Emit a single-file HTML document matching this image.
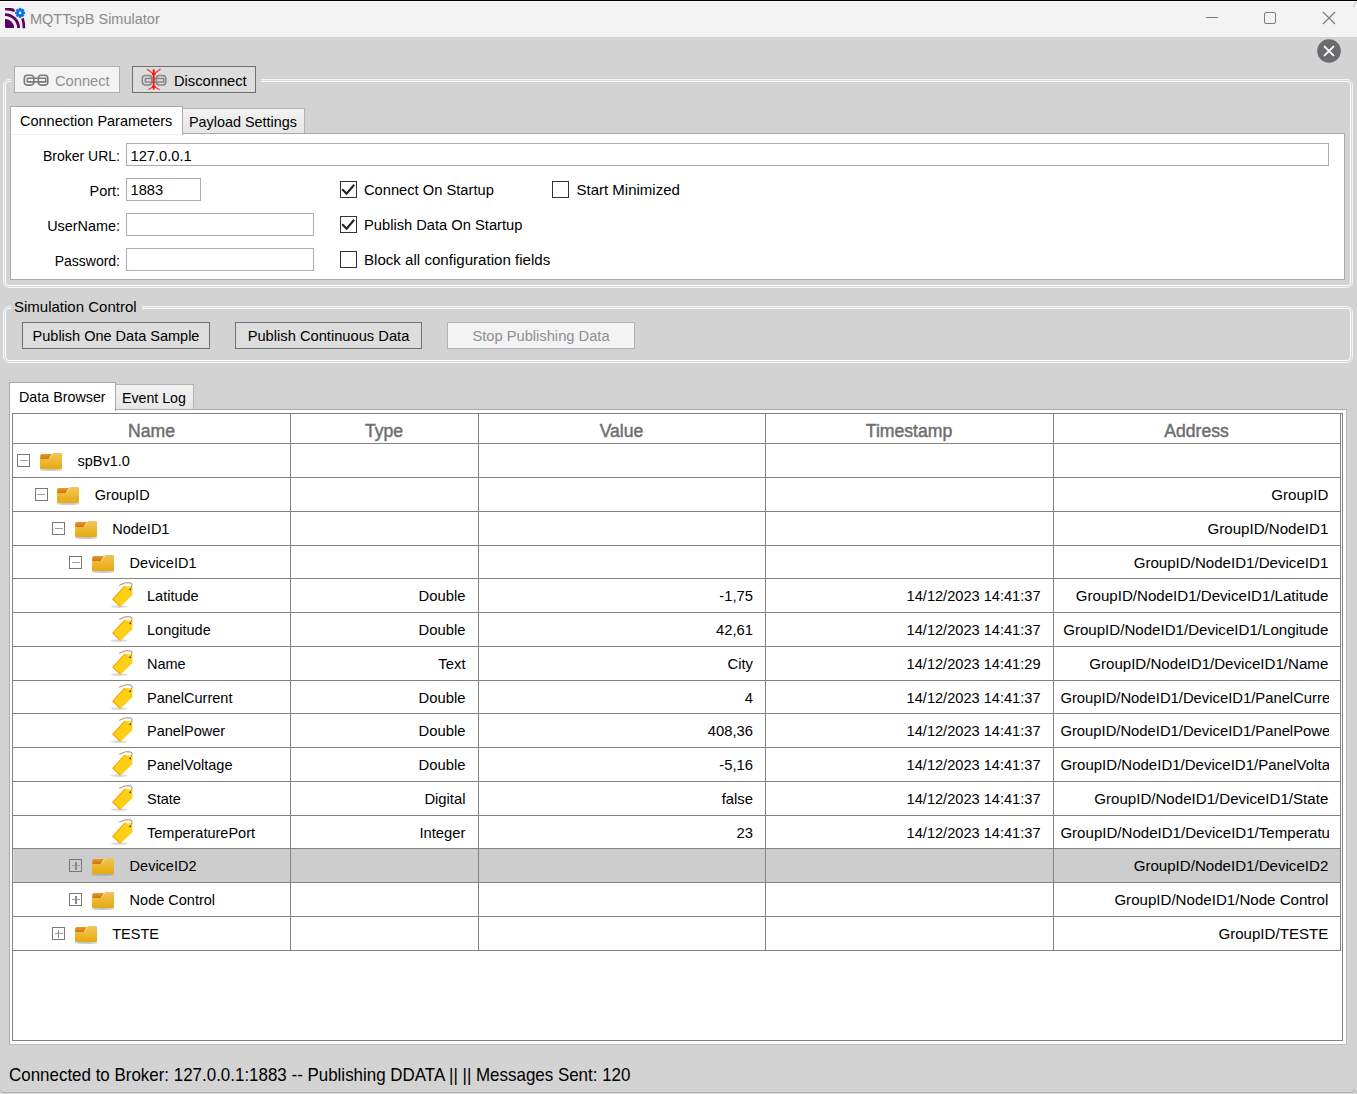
<!DOCTYPE html><html><head><meta charset="utf-8"><style>
html,body{margin:0;padding:0;}
body{width:1357px;height:1094px;overflow:hidden;position:relative;background:#d3d3d3;font-family:"Liberation Sans",sans-serif;}
.t{position:absolute;white-space:nowrap;line-height:20px;}
.b{position:absolute;box-sizing:border-box;}
svg{position:absolute;overflow:visible;}
</style></head><body>
<div class="b" style="left:0px;top:0px;width:1357px;height:37px;background:#f3f3f3;"></div>
<div class="b" style="left:0px;top:0px;width:1357px;height:1px;background:#000;"></div>
<div class="b" style="left:0px;top:1px;width:1357px;height:1px;background:#fbfbfb;"></div>
<svg style="left:5px;top:8px" width="21" height="21" viewBox="0 0 21 21">
<path d="M0 0.1 L6.3 0.1 Q9.2 0.4 9.8 2.3 L9.8 3.8 L7.6 3.8 Q5.5 2.3 0 2.3 Z" fill="#5d0066"/>
<path d="M0 5.2 A15 14.8 0 0 1 15 20 L12.1 20 A12.1 12 0 0 0 0 8 Z" fill="#5d0066"/>
<path d="M0 11 Q0 10.9 0.6 10.9 A9.2 9.1 0 0 1 9.1 20 L1.2 20 Q0 20 0 18.8 Z" fill="#5d0066"/>
<path d="M16.2 10.8 L18.9 10.1 Q20.4 15 20.2 20.2 L17.6 20.2 Q17.8 14.5 16.2 10.8 Z" fill="#5d0066"/>
<g transform="translate(15.1,4.9)"><circle r="3.7" fill="#0a72e6"/>
<g fill="#0a72e6"><rect x="-1.2" y="-5" width="2.4" height="10"/><rect x="-5" y="-1.2" width="10" height="2.4"/>
<rect x="-1.2" y="-5" width="2.4" height="10" transform="rotate(45)"/><rect x="-1.2" y="-5" width="2.4" height="10" transform="rotate(-45)"/></g>
<circle r="1.3" fill="#f3f3f3"/></g>
</svg>
<div class="t" style="left:30.00px;top:8.78px;font-size:14.5px;color:#8a8a8a;font-weight:normal;">MQTTspB Simulator</div>
<div class="b" style="left:1206px;top:17px;width:12px;height:1px;background:#7a7a7a;"></div>
<div class="b" style="left:1264px;top:12px;width:12px;height:12px;border:1px solid #7a7a7a;border-radius:2px;"></div>
<svg style="left:1322px;top:11px" width="14" height="14" viewBox="0 0 14 14"><path d="M1 1 L13 13 M13 1 L1 13" stroke="#7a7a7a" stroke-width="1.1"/></svg>
<svg style="left:1317px;top:39px" width="24" height="24" viewBox="0 0 24 24"><circle cx="12" cy="12" r="11.8" fill="#6b6a6e"/>
<path d="M7.6 7.6 L16.4 16.4 M16.4 7.6 L7.6 16.4" stroke="#fff" stroke-width="1.9" stroke-linecap="round"/></svg>
<div class="b" style="left:3px;top:79px;width:1350px;height:209px;border:1px solid rgba(255,255,255,0.75);border-radius:6px;"></div>
<div class="b" style="left:4px;top:80px;width:1348px;height:207px;border:1px solid #d3dde4;border-radius:5px;"></div>
<div class="b" style="left:5px;top:81px;width:1346px;height:205px;border:1px solid #ffffff;border-radius:4px;"></div>
<div class="b" style="left:11px;top:78px;width:250px;height:5px;background:#d3d3d3;"></div>
<div class="b" style="left:3px;top:306px;width:1350px;height:57px;border:1px solid rgba(255,255,255,0.75);border-radius:6px;"></div>
<div class="b" style="left:4px;top:307px;width:1348px;height:55px;border:1px solid #d3dde4;border-radius:5px;"></div>
<div class="b" style="left:5px;top:308px;width:1346px;height:53px;border:1px solid #ffffff;border-radius:4px;"></div>
<div class="b" style="left:11px;top:305px;width:131px;height:5px;background:#d3d3d3;"></div>
<div class="b" style="left:14px;top:66px;width:106px;height:27px;background:#f3f3f3;border:1px solid #adb1b5;"></div>
<svg style="left:23px;top:74px" width="27" height="13" viewBox="0 0 27 13">
<g fill="none" stroke="#7b7b7b" stroke-width="1.6">
<rect x="1.3" y="1.3" width="9.5" height="9.8" rx="3"/><rect x="15.3" y="1.3" width="9.5" height="9.8" rx="3"/>
<rect x="4.3" y="4.3" width="18.5" height="3.6" rx="0.5"/>
</g></svg>
<div class="t" style="left:55.00px;top:70.71px;font-size:14.7px;color:#8f8f8f;font-weight:normal;">Connect</div>
<div class="b" style="left:132px;top:66px;width:124px;height:27px;background:#dddddd;border:1px solid #6f6f6f;"></div>
<svg style="left:141px;top:67px" width="27" height="24" viewBox="0 0 27 24">
<g fill="none" stroke="#858585" stroke-width="1.5">
<rect x="1.3" y="8.5" width="9.5" height="9.5" rx="3.2"/><rect x="15.3" y="8.5" width="9.5" height="9.5" rx="3.2"/>
<rect x="4.3" y="11.5" width="18.5" height="3.4" rx="0.5"/></g>
<g stroke="#ff1414" fill="none"><path d="M12.7 2.3 L12.7 22.5" stroke-width="1.9"/><path d="M6 2 L12.7 7.3 L19.5 2" stroke-width="1.2" opacity="0.85"/><path d="M7.5 22.5 L12.7 19.5 L18.5 22.5" stroke-width="1.2" opacity="0.85"/></g>
<ellipse cx="12.7" cy="7.2" rx="2" ry="1.1" fill="#ff1010"/><ellipse cx="12.7" cy="19.6" rx="2" ry="1.1" fill="#ff1010"/>
</svg>
<div class="t" style="left:174.00px;top:70.91px;font-size:14.7px;color:#000;font-weight:normal;">Disconnect</div>
<div class="b" style="left:10px;top:133px;width:1335px;height:147px;background:#fff;border:1px solid #a9a9a9;"></div>
<div class="b" style="left:182px;top:108px;width:123px;height:25px;background:linear-gradient(#f2f2f2,#e6e6e6);border:1px solid #b3b3b3;border-bottom:none;"></div>
<div class="b" style="left:10px;top:106px;width:173px;height:29px;background:#fff;border:1px solid #a9a9a9;border-bottom:none;"></div>
<div class="b" style="left:11px;top:134px;width:171px;height:1px;background:#f0f0f0;"></div>
<div class="t" style="left:20.00px;top:110.98px;font-size:14.5px;color:#000;font-weight:normal;">Connection Parameters</div>
<div class="t" style="left:189.00px;top:111.81px;font-size:14.4px;color:#000;font-weight:normal;">Payload Settings</div>
<div class="t" style="right:1237.00px;top:146.15px;font-size:14.0px;color:#000;font-weight:normal;text-align:right;">Broker URL:</div>
<div class="b" style="left:126px;top:143px;width:1203px;height:23px;background:#fff;border:1px solid #a9adb3;"></div>
<div class="t" style="left:130.50px;top:145.91px;font-size:14.7px;color:#000;font-weight:normal;">127.0.0.1</div>
<div class="t" style="right:1237.00px;top:180.51px;font-size:14.4px;color:#000;font-weight:normal;text-align:right;">Port:</div>
<div class="b" style="left:126px;top:178px;width:75px;height:23px;background:#fff;border:1px solid #a9adb3;"></div>
<div class="t" style="left:130.50px;top:180.41px;font-size:14.7px;color:#000;font-weight:normal;">1883</div>
<div class="t" style="right:1237.00px;top:215.61px;font-size:14.4px;color:#000;font-weight:normal;text-align:right;">UserName:</div>
<div class="b" style="left:126px;top:213px;width:188px;height:23px;background:#fff;border:1px solid #a9adb3;"></div>
<div class="t" style="right:1237.00px;top:250.75px;font-size:14.0px;color:#000;font-weight:normal;text-align:right;">Password:</div>
<div class="b" style="left:126px;top:248px;width:188px;height:23px;background:#fff;border:1px solid #a9adb3;"></div>
<div class="b" style="left:340px;top:181px;width:17px;height:17px;background:#fff;border:1px solid #333;"></div>
<svg style="left:340px;top:181px" width="17" height="17" viewBox="0 0 17 17"><path d="M2.2 8.2 L6.6 12.6 L14.2 3.8" fill="none" stroke="#222" stroke-width="2.1"/></svg>
<div class="t" style="left:364.00px;top:179.91px;font-size:14.7px;color:#000;font-weight:normal;">Connect On Startup</div>
<div class="b" style="left:340px;top:216px;width:17px;height:17px;background:#fff;border:1px solid #333;"></div>
<svg style="left:340px;top:216px" width="17" height="17" viewBox="0 0 17 17"><path d="M2.2 8.2 L6.6 12.6 L14.2 3.8" fill="none" stroke="#222" stroke-width="2.1"/></svg>
<div class="t" style="left:364.00px;top:214.91px;font-size:14.7px;color:#000;font-weight:normal;">Publish Data On Startup</div>
<div class="b" style="left:340px;top:251px;width:17px;height:17px;background:#fff;border:1px solid #333;"></div>
<div class="t" style="left:364.00px;top:249.77px;font-size:15.1px;color:#000;font-weight:normal;">Block all configuration fields</div>
<div class="b" style="left:552px;top:181px;width:17px;height:17px;background:#fff;border:1px solid #333;"></div>
<div class="t" style="left:576.50px;top:179.80px;font-size:15px;color:#000;font-weight:normal;">Start Minimized</div>
<div class="t" style="left:14.00px;top:296.80px;font-size:15px;color:#000;font-weight:normal;">Simulation Control</div>
<div class="b" style="left:22px;top:322px;width:188px;height:27px;background:#dddddd;border:1px solid #707070;"></div>
<div class="t" style="left:-84.00px;width:400px;top:326.28px;font-size:14.5px;color:#000;font-weight:normal;text-align:center;">Publish One Data Sample</div>
<div class="b" style="left:235px;top:322px;width:187px;height:27px;background:#dddddd;border:1px solid #707070;"></div>
<div class="t" style="left:128.50px;width:400px;top:326.21px;font-size:14.7px;color:#000;font-weight:normal;text-align:center;">Publish Continuous Data</div>
<div class="b" style="left:447px;top:322px;width:188px;height:27px;background:#f3f3f3;border:1px solid #b0b4b8;"></div>
<div class="t" style="left:341.00px;width:400px;top:326.21px;font-size:14.7px;color:#8f8f8f;font-weight:normal;text-align:center;">Stop Publishing Data</div>
<div class="b" style="left:9px;top:409px;width:1338px;height:636px;background:#fff;border:1px solid #bcbcbc;border-left-color:#a9a9a9;border-top-color:#a9a9a9;"></div>
<div class="b" style="left:115px;top:384px;width:79px;height:25px;background:linear-gradient(#f2f2f2,#e6e6e6);border:1px solid #b3b3b3;border-bottom:none;"></div>
<div class="b" style="left:9px;top:382px;width:107px;height:29px;background:#fff;border:1px solid #a9a9a9;border-bottom:none;"></div>
<div class="t" style="left:19.00px;top:387.05px;font-size:14.3px;color:#000;font-weight:normal;">Data Browser</div>
<div class="t" style="left:122.00px;top:387.58px;font-size:14.2px;color:#000;font-weight:normal;">Event Log</div>
<div class="b" style="left:12px;top:413px;width:1331px;height:628px;background:#fff;border:1px solid #828282;"></div>
<div class="b" style="left:13px;top:443px;width:1327px;height:1px;background:#828282;"></div>
<div class="b" style="left:13px;top:477px;width:1327px;height:1px;background:#828282;"></div>
<div class="b" style="left:13px;top:511px;width:1327px;height:1px;background:#828282;"></div>
<div class="b" style="left:13px;top:545px;width:1327px;height:1px;background:#828282;"></div>
<div class="b" style="left:13px;top:578px;width:1327px;height:1px;background:#828282;"></div>
<div class="b" style="left:13px;top:612px;width:1327px;height:1px;background:#828282;"></div>
<div class="b" style="left:13px;top:646px;width:1327px;height:1px;background:#828282;"></div>
<div class="b" style="left:13px;top:680px;width:1327px;height:1px;background:#828282;"></div>
<div class="b" style="left:13px;top:713px;width:1327px;height:1px;background:#828282;"></div>
<div class="b" style="left:13px;top:747px;width:1327px;height:1px;background:#828282;"></div>
<div class="b" style="left:13px;top:781px;width:1327px;height:1px;background:#828282;"></div>
<div class="b" style="left:13px;top:815px;width:1327px;height:1px;background:#828282;"></div>
<div class="b" style="left:13px;top:848px;width:1327px;height:1px;background:#828282;"></div>
<div class="b" style="left:13px;top:882px;width:1327px;height:1px;background:#828282;"></div>
<div class="b" style="left:13px;top:916px;width:1327px;height:1px;background:#828282;"></div>
<div class="b" style="left:13px;top:950px;width:1327px;height:1px;background:#828282;"></div>
<div class="b" style="left:13px;top:849px;width:1327px;height:33px;background:#cdcdcd;"></div>
<div class="b" style="left:13px;top:849px;width:1px;height:33px;background:#e0e0e0;"></div>
<div class="b" style="left:290px;top:414px;width:1px;height:537px;background:#828282;"></div>
<div class="b" style="left:478px;top:414px;width:1px;height:537px;background:#828282;"></div>
<div class="b" style="left:765px;top:414px;width:1px;height:537px;background:#828282;"></div>
<div class="b" style="left:1053px;top:414px;width:1px;height:537px;background:#828282;"></div>
<div class="b" style="left:1340px;top:414px;width:1px;height:537px;background:#828282;"></div>
<div class="t" style="left:-48.50px;width:400px;top:420.80px;font-size:17.6px;color:#6e6e6e;font-weight:normal;text-align:center;-webkit-text-stroke:0.45px #6e6e6e;">Name</div>
<div class="t" style="left:184.00px;width:400px;top:420.80px;font-size:17.6px;color:#6e6e6e;font-weight:normal;text-align:center;-webkit-text-stroke:0.45px #6e6e6e;">Type</div>
<div class="t" style="left:421.50px;width:400px;top:420.80px;font-size:17.6px;color:#6e6e6e;font-weight:normal;text-align:center;-webkit-text-stroke:0.45px #6e6e6e;">Value</div>
<div class="t" style="left:709.00px;width:400px;top:420.80px;font-size:17.6px;color:#6e6e6e;font-weight:normal;text-align:center;-webkit-text-stroke:0.45px #6e6e6e;">Timestamp</div>
<div class="t" style="left:996.50px;width:400px;top:420.80px;font-size:17.6px;color:#6e6e6e;font-weight:normal;text-align:center;-webkit-text-stroke:0.45px #6e6e6e;">Address</div>
<div class="b" style="left:17.2px;top:454.2px;width:13px;height:13px;border:1px solid #787878;background:#fff;"></div>
<div class="b" style="left:19.8px;top:460.2px;width:8px;height:1px;background:#a0a0a0;"></div>
<svg style="left:40.0px;top:452.8px" width="24" height="19" viewBox="0 0 24 19">
<defs><linearGradient id="fg0" x1="0" y1="0" x2="0" y2="1"><stop offset="0" stop-color="#f3c55a"/><stop offset="1" stop-color="#e5aa0d"/></linearGradient>
<linearGradient id="ft0" x1="0" y1="0" x2="0" y2="1"><stop offset="0" stop-color="#e89a30"/><stop offset="1" stop-color="#cf7408"/></linearGradient></defs>
<ellipse cx="11" cy="16.9" rx="11.8" ry="0.8" fill="#8e96a6" opacity="0.6"/>
<path d="M0.2 6 L0.2 2.6 Q0.4 1.2 1.6 1.1 L12.5 1.1 L12.5 6 Z" fill="url(#ft0)"/>
<path d="M0 5.9 L9 5.9 L12.6 0.8 Q13 0.1 14 0.1 L21 0.1 Q22 0.1 22 1.2 L22 15 Q22 16.1 20.8 16.1 L1.2 16.1 Q0 16.1 0 15 Z" fill="url(#fg0)"/>
<path d="M9.2 5.8 L12.8 0.6" stroke="#fbe7a0" stroke-width="0.9"/>
</svg>
<div class="t" style="left:77.40px;top:451.38px;font-size:14.5px;color:#000;font-weight:normal;">spBv1.0</div>
<div class="b" style="left:34.6px;top:488.2px;width:13px;height:13px;border:1px solid #787878;background:#fff;"></div>
<div class="b" style="left:37.2px;top:494.2px;width:8px;height:1px;background:#a0a0a0;"></div>
<svg style="left:57.4px;top:486.8px" width="24" height="19" viewBox="0 0 24 19">
<defs><linearGradient id="fg1" x1="0" y1="0" x2="0" y2="1"><stop offset="0" stop-color="#f3c55a"/><stop offset="1" stop-color="#e5aa0d"/></linearGradient>
<linearGradient id="ft1" x1="0" y1="0" x2="0" y2="1"><stop offset="0" stop-color="#e89a30"/><stop offset="1" stop-color="#cf7408"/></linearGradient></defs>
<ellipse cx="11" cy="16.9" rx="11.8" ry="0.8" fill="#8e96a6" opacity="0.6"/>
<path d="M0.2 6 L0.2 2.6 Q0.4 1.2 1.6 1.1 L12.5 1.1 L12.5 6 Z" fill="url(#ft1)"/>
<path d="M0 5.9 L9 5.9 L12.6 0.8 Q13 0.1 14 0.1 L21 0.1 Q22 0.1 22 1.2 L22 15 Q22 16.1 20.8 16.1 L1.2 16.1 Q0 16.1 0 15 Z" fill="url(#fg1)"/>
<path d="M9.2 5.8 L12.8 0.6" stroke="#fbe7a0" stroke-width="0.9"/>
</svg>
<div class="t" style="left:94.80px;top:485.38px;font-size:14.5px;color:#000;font-weight:normal;">GroupID</div>
<div class="t" style="right:28.70px;top:485.17px;font-size:15.1px;color:#000;font-weight:normal;text-align:right;">GroupID</div>
<div class="b" style="left:52.0px;top:522.2px;width:13px;height:13px;border:1px solid #787878;background:#fff;"></div>
<div class="b" style="left:54.6px;top:528.2px;width:8px;height:1px;background:#a0a0a0;"></div>
<svg style="left:74.8px;top:520.8px" width="24" height="19" viewBox="0 0 24 19">
<defs><linearGradient id="fg2" x1="0" y1="0" x2="0" y2="1"><stop offset="0" stop-color="#f3c55a"/><stop offset="1" stop-color="#e5aa0d"/></linearGradient>
<linearGradient id="ft2" x1="0" y1="0" x2="0" y2="1"><stop offset="0" stop-color="#e89a30"/><stop offset="1" stop-color="#cf7408"/></linearGradient></defs>
<ellipse cx="11" cy="16.9" rx="11.8" ry="0.8" fill="#8e96a6" opacity="0.6"/>
<path d="M0.2 6 L0.2 2.6 Q0.4 1.2 1.6 1.1 L12.5 1.1 L12.5 6 Z" fill="url(#ft2)"/>
<path d="M0 5.9 L9 5.9 L12.6 0.8 Q13 0.1 14 0.1 L21 0.1 Q22 0.1 22 1.2 L22 15 Q22 16.1 20.8 16.1 L1.2 16.1 Q0 16.1 0 15 Z" fill="url(#fg2)"/>
<path d="M9.2 5.8 L12.8 0.6" stroke="#fbe7a0" stroke-width="0.9"/>
</svg>
<div class="t" style="left:112.20px;top:519.38px;font-size:14.5px;color:#000;font-weight:normal;">NodeID1</div>
<div class="t" style="right:28.70px;top:519.17px;font-size:15.1px;color:#000;font-weight:normal;text-align:right;">GroupID/NodeID1</div>
<div class="b" style="left:69.4px;top:556.2px;width:13px;height:13px;border:1px solid #787878;background:#fff;"></div>
<div class="b" style="left:72.0px;top:562.2px;width:8px;height:1px;background:#a0a0a0;"></div>
<svg style="left:92.2px;top:554.8px" width="24" height="19" viewBox="0 0 24 19">
<defs><linearGradient id="fg3" x1="0" y1="0" x2="0" y2="1"><stop offset="0" stop-color="#f3c55a"/><stop offset="1" stop-color="#e5aa0d"/></linearGradient>
<linearGradient id="ft3" x1="0" y1="0" x2="0" y2="1"><stop offset="0" stop-color="#e89a30"/><stop offset="1" stop-color="#cf7408"/></linearGradient></defs>
<ellipse cx="11" cy="16.9" rx="11.8" ry="0.8" fill="#8e96a6" opacity="0.6"/>
<path d="M0.2 6 L0.2 2.6 Q0.4 1.2 1.6 1.1 L12.5 1.1 L12.5 6 Z" fill="url(#ft3)"/>
<path d="M0 5.9 L9 5.9 L12.6 0.8 Q13 0.1 14 0.1 L21 0.1 Q22 0.1 22 1.2 L22 15 Q22 16.1 20.8 16.1 L1.2 16.1 Q0 16.1 0 15 Z" fill="url(#fg3)"/>
<path d="M9.2 5.8 L12.8 0.6" stroke="#fbe7a0" stroke-width="0.9"/>
</svg>
<div class="t" style="left:129.60px;top:553.38px;font-size:14.5px;color:#000;font-weight:normal;">DeviceID1</div>
<div class="t" style="right:28.70px;top:553.17px;font-size:15.1px;color:#000;font-weight:normal;text-align:right;">GroupID/NodeID1/DeviceID1</div>
<svg style="left:106.8px;top:581.2px" width="28" height="28" viewBox="0 0 28 28">
<ellipse cx="12" cy="25.6" rx="8.5" ry="1.3" fill="#7d8594" opacity="0.3"/>
<path d="M17.5 4.7 L25.2 5.6 L25.5 13.9 L13.2 26 L5.2 18.3 Z" fill="#fdd017"/>
<path d="M17.5 4.7 L5.2 18.3 L13.2 26 L13.6 25 L6.5 18.3 L18 5.6 Z" fill="#f79800" opacity="0.9"/>
<path d="M18.5 5 L25.2 5.6 L25.4 10 Q22 6.5 18.5 5 Z" fill="#fff23a" opacity="0.8"/>
<circle cx="23.3" cy="8.2" r="1.05" fill="#6b3d0c"/>
<path d="M12.2 4.3 Q19 0.3 24 2 Q26.5 3.5 23.2 8.1" fill="none" stroke="#a47a4e" stroke-width="0.9"/>
</svg>
<div class="t" style="left:147.00px;top:586.38px;font-size:14.5px;color:#000;font-weight:normal;">Latitude</div>
<div class="t" style="right:891.50px;top:586.27px;font-size:14.8px;color:#000;font-weight:normal;text-align:right;">Double</div>
<div class="t" style="right:604.00px;top:586.27px;font-size:14.8px;color:#000;font-weight:normal;text-align:right;">-1,75</div>
<div class="t" style="right:316.50px;top:586.34px;font-size:14.6px;color:#000;font-weight:normal;text-align:right;">14/12/2023 14:41:37</div>
<div class="t" style="right:28.70px;top:586.17px;font-size:15.1px;color:#000;font-weight:normal;text-align:right;">GroupID/NodeID1/DeviceID1/Latitude</div>
<svg style="left:106.8px;top:615.2px" width="28" height="28" viewBox="0 0 28 28">
<ellipse cx="12" cy="25.6" rx="8.5" ry="1.3" fill="#7d8594" opacity="0.3"/>
<path d="M17.5 4.7 L25.2 5.6 L25.5 13.9 L13.2 26 L5.2 18.3 Z" fill="#fdd017"/>
<path d="M17.5 4.7 L5.2 18.3 L13.2 26 L13.6 25 L6.5 18.3 L18 5.6 Z" fill="#f79800" opacity="0.9"/>
<path d="M18.5 5 L25.2 5.6 L25.4 10 Q22 6.5 18.5 5 Z" fill="#fff23a" opacity="0.8"/>
<circle cx="23.3" cy="8.2" r="1.05" fill="#6b3d0c"/>
<path d="M12.2 4.3 Q19 0.3 24 2 Q26.5 3.5 23.2 8.1" fill="none" stroke="#a47a4e" stroke-width="0.9"/>
</svg>
<div class="t" style="left:147.00px;top:620.38px;font-size:14.5px;color:#000;font-weight:normal;">Longitude</div>
<div class="t" style="right:891.50px;top:620.27px;font-size:14.8px;color:#000;font-weight:normal;text-align:right;">Double</div>
<div class="t" style="right:604.00px;top:620.27px;font-size:14.8px;color:#000;font-weight:normal;text-align:right;">42,61</div>
<div class="t" style="right:316.50px;top:620.34px;font-size:14.6px;color:#000;font-weight:normal;text-align:right;">14/12/2023 14:41:37</div>
<div class="t" style="right:28.70px;top:620.17px;font-size:15.1px;color:#000;font-weight:normal;text-align:right;">GroupID/NodeID1/DeviceID1/Longitude</div>
<svg style="left:106.8px;top:649.2px" width="28" height="28" viewBox="0 0 28 28">
<ellipse cx="12" cy="25.6" rx="8.5" ry="1.3" fill="#7d8594" opacity="0.3"/>
<path d="M17.5 4.7 L25.2 5.6 L25.5 13.9 L13.2 26 L5.2 18.3 Z" fill="#fdd017"/>
<path d="M17.5 4.7 L5.2 18.3 L13.2 26 L13.6 25 L6.5 18.3 L18 5.6 Z" fill="#f79800" opacity="0.9"/>
<path d="M18.5 5 L25.2 5.6 L25.4 10 Q22 6.5 18.5 5 Z" fill="#fff23a" opacity="0.8"/>
<circle cx="23.3" cy="8.2" r="1.05" fill="#6b3d0c"/>
<path d="M12.2 4.3 Q19 0.3 24 2 Q26.5 3.5 23.2 8.1" fill="none" stroke="#a47a4e" stroke-width="0.9"/>
</svg>
<div class="t" style="left:147.00px;top:654.38px;font-size:14.5px;color:#000;font-weight:normal;">Name</div>
<div class="t" style="right:891.50px;top:654.27px;font-size:14.8px;color:#000;font-weight:normal;text-align:right;">Text</div>
<div class="t" style="right:604.00px;top:654.27px;font-size:14.8px;color:#000;font-weight:normal;text-align:right;">City</div>
<div class="t" style="right:316.50px;top:654.34px;font-size:14.6px;color:#000;font-weight:normal;text-align:right;">14/12/2023 14:41:29</div>
<div class="t" style="right:28.70px;top:654.17px;font-size:15.1px;color:#000;font-weight:normal;text-align:right;">GroupID/NodeID1/DeviceID1/Name</div>
<svg style="left:106.8px;top:683.2px" width="28" height="28" viewBox="0 0 28 28">
<ellipse cx="12" cy="25.6" rx="8.5" ry="1.3" fill="#7d8594" opacity="0.3"/>
<path d="M17.5 4.7 L25.2 5.6 L25.5 13.9 L13.2 26 L5.2 18.3 Z" fill="#fdd017"/>
<path d="M17.5 4.7 L5.2 18.3 L13.2 26 L13.6 25 L6.5 18.3 L18 5.6 Z" fill="#f79800" opacity="0.9"/>
<path d="M18.5 5 L25.2 5.6 L25.4 10 Q22 6.5 18.5 5 Z" fill="#fff23a" opacity="0.8"/>
<circle cx="23.3" cy="8.2" r="1.05" fill="#6b3d0c"/>
<path d="M12.2 4.3 Q19 0.3 24 2 Q26.5 3.5 23.2 8.1" fill="none" stroke="#a47a4e" stroke-width="0.9"/>
</svg>
<div class="t" style="left:147.00px;top:688.38px;font-size:14.5px;color:#000;font-weight:normal;">PanelCurrent</div>
<div class="t" style="right:891.50px;top:688.27px;font-size:14.8px;color:#000;font-weight:normal;text-align:right;">Double</div>
<div class="t" style="right:604.00px;top:688.27px;font-size:14.8px;color:#000;font-weight:normal;text-align:right;">4</div>
<div class="t" style="right:316.50px;top:688.34px;font-size:14.6px;color:#000;font-weight:normal;text-align:right;">14/12/2023 14:41:37</div>
<div style="position:absolute;left:1059px;top:680.2px;width:270px;height:33px;overflow:hidden;">
<div class="t" style="left:1.40px;top:8.07px;font-size:14.8px;color:#000;font-weight:normal;">GroupID/NodeID1/DeviceID1/PanelCurre</div>
</div>
<svg style="left:106.8px;top:716.2px" width="28" height="28" viewBox="0 0 28 28">
<ellipse cx="12" cy="25.6" rx="8.5" ry="1.3" fill="#7d8594" opacity="0.3"/>
<path d="M17.5 4.7 L25.2 5.6 L25.5 13.9 L13.2 26 L5.2 18.3 Z" fill="#fdd017"/>
<path d="M17.5 4.7 L5.2 18.3 L13.2 26 L13.6 25 L6.5 18.3 L18 5.6 Z" fill="#f79800" opacity="0.9"/>
<path d="M18.5 5 L25.2 5.6 L25.4 10 Q22 6.5 18.5 5 Z" fill="#fff23a" opacity="0.8"/>
<circle cx="23.3" cy="8.2" r="1.05" fill="#6b3d0c"/>
<path d="M12.2 4.3 Q19 0.3 24 2 Q26.5 3.5 23.2 8.1" fill="none" stroke="#a47a4e" stroke-width="0.9"/>
</svg>
<div class="t" style="left:147.00px;top:721.38px;font-size:14.5px;color:#000;font-weight:normal;">PanelPower</div>
<div class="t" style="right:891.50px;top:721.27px;font-size:14.8px;color:#000;font-weight:normal;text-align:right;">Double</div>
<div class="t" style="right:604.00px;top:721.27px;font-size:14.8px;color:#000;font-weight:normal;text-align:right;">408,36</div>
<div class="t" style="right:316.50px;top:721.34px;font-size:14.6px;color:#000;font-weight:normal;text-align:right;">14/12/2023 14:41:37</div>
<div style="position:absolute;left:1059px;top:713.2px;width:270px;height:33px;overflow:hidden;">
<div class="t" style="left:1.40px;top:8.07px;font-size:14.8px;color:#000;font-weight:normal;">GroupID/NodeID1/DeviceID1/PanelPowe</div>
</div>
<svg style="left:106.8px;top:750.2px" width="28" height="28" viewBox="0 0 28 28">
<ellipse cx="12" cy="25.6" rx="8.5" ry="1.3" fill="#7d8594" opacity="0.3"/>
<path d="M17.5 4.7 L25.2 5.6 L25.5 13.9 L13.2 26 L5.2 18.3 Z" fill="#fdd017"/>
<path d="M17.5 4.7 L5.2 18.3 L13.2 26 L13.6 25 L6.5 18.3 L18 5.6 Z" fill="#f79800" opacity="0.9"/>
<path d="M18.5 5 L25.2 5.6 L25.4 10 Q22 6.5 18.5 5 Z" fill="#fff23a" opacity="0.8"/>
<circle cx="23.3" cy="8.2" r="1.05" fill="#6b3d0c"/>
<path d="M12.2 4.3 Q19 0.3 24 2 Q26.5 3.5 23.2 8.1" fill="none" stroke="#a47a4e" stroke-width="0.9"/>
</svg>
<div class="t" style="left:147.00px;top:755.38px;font-size:14.5px;color:#000;font-weight:normal;">PanelVoltage</div>
<div class="t" style="right:891.50px;top:755.27px;font-size:14.8px;color:#000;font-weight:normal;text-align:right;">Double</div>
<div class="t" style="right:604.00px;top:755.27px;font-size:14.8px;color:#000;font-weight:normal;text-align:right;">-5,16</div>
<div class="t" style="right:316.50px;top:755.34px;font-size:14.6px;color:#000;font-weight:normal;text-align:right;">14/12/2023 14:41:37</div>
<div style="position:absolute;left:1059px;top:747.2px;width:270px;height:33px;overflow:hidden;">
<div class="t" style="left:1.40px;top:7.99px;font-size:15.03px;color:#000;font-weight:normal;">GroupID/NodeID1/DeviceID1/PanelVolta</div>
</div>
<svg style="left:106.8px;top:784.2px" width="28" height="28" viewBox="0 0 28 28">
<ellipse cx="12" cy="25.6" rx="8.5" ry="1.3" fill="#7d8594" opacity="0.3"/>
<path d="M17.5 4.7 L25.2 5.6 L25.5 13.9 L13.2 26 L5.2 18.3 Z" fill="#fdd017"/>
<path d="M17.5 4.7 L5.2 18.3 L13.2 26 L13.6 25 L6.5 18.3 L18 5.6 Z" fill="#f79800" opacity="0.9"/>
<path d="M18.5 5 L25.2 5.6 L25.4 10 Q22 6.5 18.5 5 Z" fill="#fff23a" opacity="0.8"/>
<circle cx="23.3" cy="8.2" r="1.05" fill="#6b3d0c"/>
<path d="M12.2 4.3 Q19 0.3 24 2 Q26.5 3.5 23.2 8.1" fill="none" stroke="#a47a4e" stroke-width="0.9"/>
</svg>
<div class="t" style="left:147.00px;top:789.38px;font-size:14.5px;color:#000;font-weight:normal;">State</div>
<div class="t" style="right:891.50px;top:789.27px;font-size:14.8px;color:#000;font-weight:normal;text-align:right;">Digital</div>
<div class="t" style="right:604.00px;top:789.27px;font-size:14.8px;color:#000;font-weight:normal;text-align:right;">false</div>
<div class="t" style="right:316.50px;top:789.34px;font-size:14.6px;color:#000;font-weight:normal;text-align:right;">14/12/2023 14:41:37</div>
<div class="t" style="right:28.70px;top:789.17px;font-size:15.1px;color:#000;font-weight:normal;text-align:right;">GroupID/NodeID1/DeviceID1/State</div>
<svg style="left:106.8px;top:818.2px" width="28" height="28" viewBox="0 0 28 28">
<ellipse cx="12" cy="25.6" rx="8.5" ry="1.3" fill="#7d8594" opacity="0.3"/>
<path d="M17.5 4.7 L25.2 5.6 L25.5 13.9 L13.2 26 L5.2 18.3 Z" fill="#fdd017"/>
<path d="M17.5 4.7 L5.2 18.3 L13.2 26 L13.6 25 L6.5 18.3 L18 5.6 Z" fill="#f79800" opacity="0.9"/>
<path d="M18.5 5 L25.2 5.6 L25.4 10 Q22 6.5 18.5 5 Z" fill="#fff23a" opacity="0.8"/>
<circle cx="23.3" cy="8.2" r="1.05" fill="#6b3d0c"/>
<path d="M12.2 4.3 Q19 0.3 24 2 Q26.5 3.5 23.2 8.1" fill="none" stroke="#a47a4e" stroke-width="0.9"/>
</svg>
<div class="t" style="left:147.00px;top:823.38px;font-size:14.5px;color:#000;font-weight:normal;">TemperaturePort</div>
<div class="t" style="right:891.50px;top:823.27px;font-size:14.8px;color:#000;font-weight:normal;text-align:right;">Integer</div>
<div class="t" style="right:604.00px;top:823.27px;font-size:14.8px;color:#000;font-weight:normal;text-align:right;">23</div>
<div class="t" style="right:316.50px;top:823.34px;font-size:14.6px;color:#000;font-weight:normal;text-align:right;">14/12/2023 14:41:37</div>
<div style="position:absolute;left:1059px;top:815.2px;width:270px;height:33px;overflow:hidden;">
<div class="t" style="left:1.40px;top:7.98px;font-size:15.07px;color:#000;font-weight:normal;">GroupID/NodeID1/DeviceID1/Temperatu</div>
</div>
<div class="b" style="left:69.4px;top:859.2px;width:13px;height:13px;border:1px solid #787878;background:#cdcdcd;"></div>
<div class="b" style="left:72.0px;top:865.2px;width:8px;height:1px;background:#a0a0a0;"></div>
<div class="b" style="left:75.4px;top:861.5px;width:1.4px;height:8.4px;background:#8a8a8a;"></div>
<svg style="left:92.2px;top:857.8px" width="24" height="19" viewBox="0 0 24 19">
<defs><linearGradient id="fg12" x1="0" y1="0" x2="0" y2="1"><stop offset="0" stop-color="#f3c55a"/><stop offset="1" stop-color="#e5aa0d"/></linearGradient>
<linearGradient id="ft12" x1="0" y1="0" x2="0" y2="1"><stop offset="0" stop-color="#e89a30"/><stop offset="1" stop-color="#cf7408"/></linearGradient></defs>
<ellipse cx="11" cy="16.9" rx="11.8" ry="0.8" fill="#8e96a6" opacity="0.6"/>
<path d="M0.2 6 L0.2 2.6 Q0.4 1.2 1.6 1.1 L12.5 1.1 L12.5 6 Z" fill="url(#ft12)"/>
<path d="M0 5.9 L9 5.9 L12.6 0.8 Q13 0.1 14 0.1 L21 0.1 Q22 0.1 22 1.2 L22 15 Q22 16.1 20.8 16.1 L1.2 16.1 Q0 16.1 0 15 Z" fill="url(#fg12)"/>
<path d="M9.2 5.8 L12.8 0.6" stroke="#fbe7a0" stroke-width="0.9"/>
</svg>
<div class="t" style="left:129.60px;top:856.38px;font-size:14.5px;color:#000;font-weight:normal;">DeviceID2</div>
<div class="t" style="right:28.70px;top:856.17px;font-size:15.1px;color:#000;font-weight:normal;text-align:right;">GroupID/NodeID1/DeviceID2</div>
<div class="b" style="left:69.4px;top:893.2px;width:13px;height:13px;border:1px solid #787878;background:#fff;"></div>
<div class="b" style="left:72.0px;top:899.2px;width:8px;height:1px;background:#a0a0a0;"></div>
<div class="b" style="left:75.4px;top:895.5px;width:1.4px;height:8.4px;background:#8a8a8a;"></div>
<svg style="left:92.2px;top:891.8px" width="24" height="19" viewBox="0 0 24 19">
<defs><linearGradient id="fg13" x1="0" y1="0" x2="0" y2="1"><stop offset="0" stop-color="#f3c55a"/><stop offset="1" stop-color="#e5aa0d"/></linearGradient>
<linearGradient id="ft13" x1="0" y1="0" x2="0" y2="1"><stop offset="0" stop-color="#e89a30"/><stop offset="1" stop-color="#cf7408"/></linearGradient></defs>
<ellipse cx="11" cy="16.9" rx="11.8" ry="0.8" fill="#8e96a6" opacity="0.6"/>
<path d="M0.2 6 L0.2 2.6 Q0.4 1.2 1.6 1.1 L12.5 1.1 L12.5 6 Z" fill="url(#ft13)"/>
<path d="M0 5.9 L9 5.9 L12.6 0.8 Q13 0.1 14 0.1 L21 0.1 Q22 0.1 22 1.2 L22 15 Q22 16.1 20.8 16.1 L1.2 16.1 Q0 16.1 0 15 Z" fill="url(#fg13)"/>
<path d="M9.2 5.8 L12.8 0.6" stroke="#fbe7a0" stroke-width="0.9"/>
</svg>
<div class="t" style="left:129.60px;top:890.38px;font-size:14.5px;color:#000;font-weight:normal;">Node Control</div>
<div class="t" style="right:28.70px;top:890.17px;font-size:15.1px;color:#000;font-weight:normal;text-align:right;">GroupID/NodeID1/Node Control</div>
<div class="b" style="left:52.0px;top:927.2px;width:13px;height:13px;border:1px solid #787878;background:#fff;"></div>
<div class="b" style="left:54.6px;top:933.2px;width:8px;height:1px;background:#a0a0a0;"></div>
<div class="b" style="left:58.0px;top:929.5px;width:1.4px;height:8.4px;background:#8a8a8a;"></div>
<svg style="left:74.8px;top:925.8px" width="24" height="19" viewBox="0 0 24 19">
<defs><linearGradient id="fg14" x1="0" y1="0" x2="0" y2="1"><stop offset="0" stop-color="#f3c55a"/><stop offset="1" stop-color="#e5aa0d"/></linearGradient>
<linearGradient id="ft14" x1="0" y1="0" x2="0" y2="1"><stop offset="0" stop-color="#e89a30"/><stop offset="1" stop-color="#cf7408"/></linearGradient></defs>
<ellipse cx="11" cy="16.9" rx="11.8" ry="0.8" fill="#8e96a6" opacity="0.6"/>
<path d="M0.2 6 L0.2 2.6 Q0.4 1.2 1.6 1.1 L12.5 1.1 L12.5 6 Z" fill="url(#ft14)"/>
<path d="M0 5.9 L9 5.9 L12.6 0.8 Q13 0.1 14 0.1 L21 0.1 Q22 0.1 22 1.2 L22 15 Q22 16.1 20.8 16.1 L1.2 16.1 Q0 16.1 0 15 Z" fill="url(#fg14)"/>
<path d="M9.2 5.8 L12.8 0.6" stroke="#fbe7a0" stroke-width="0.9"/>
</svg>
<div class="t" style="left:112.20px;top:924.38px;font-size:14.5px;color:#000;font-weight:normal;">TESTE</div>
<div class="t" style="right:28.70px;top:924.17px;font-size:15.1px;color:#000;font-weight:normal;text-align:right;">GroupID/TESTE</div>
<div class="t" style="left:9.00px;top:1066.33px;font-size:16.95px;color:#000;font-weight:normal;transform:scaleY(1.13);transform-origin:0 15.87px;">Connected to Broker: 127.0.0.1:1883 -- Publishing DDATA || || Messages Sent: 120</div>
<div class="b" style="left:3px;top:1092px;width:1350px;height:1px;background:#b0b0b0;"></div>
<div class="b" style="left:0px;top:1093px;width:1357px;height:1px;background:#d9d9d9;"></div>
<svg style="left:0px;top:1086px" width="6" height="8" viewBox="0 0 6 8"><path d="M0 3.5 Q1 6.5 4 6.5 L6 6.5" fill="none" stroke="#b0b0b0" stroke-width="1"/></svg>
<svg style="left:1350px;top:1086px" width="7" height="8" viewBox="0 0 7 8"><path d="M0 6.5 L2 6.5 Q3.5 6.5 4.3 3.5 Q5 6 7 6.5" fill="none" stroke="#b0b0b0" stroke-width="1"/></svg>
<svg style="left:1350px;top:0px" width="7" height="8" viewBox="0 0 7 8"><path d="M3.5 7 Q3.5 2.5 7 1.8" fill="none" stroke="#b5b5b5" stroke-width="0.8"/></svg>
</body></html>
